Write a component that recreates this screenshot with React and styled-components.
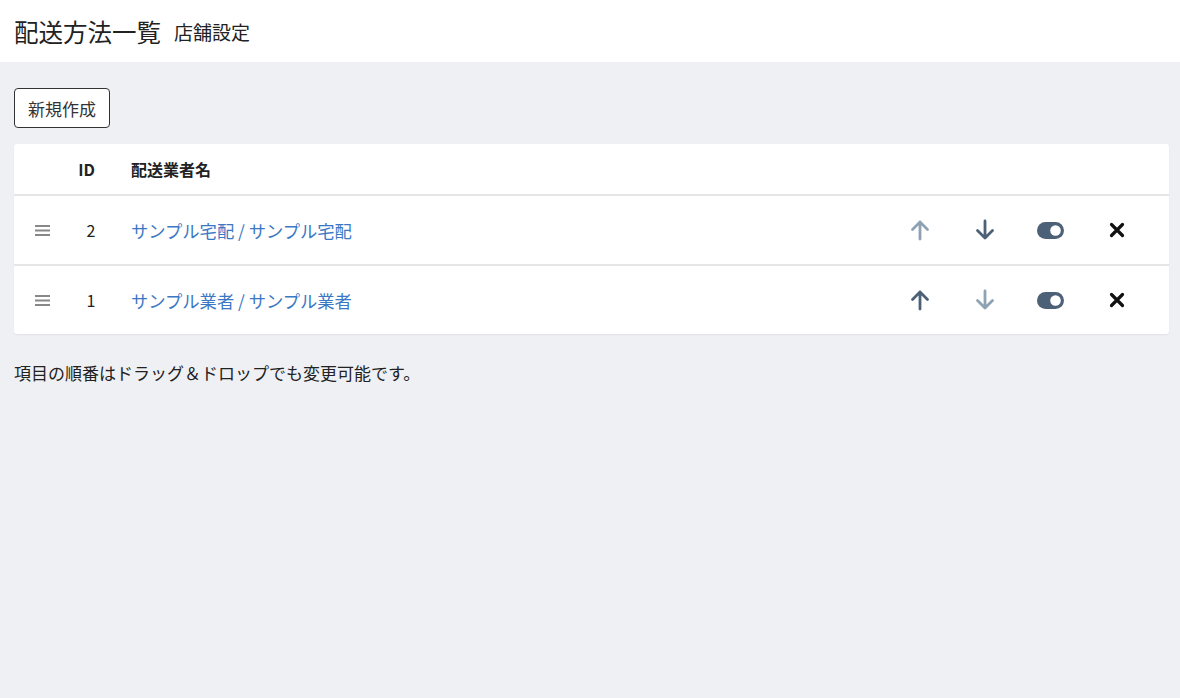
import React from "react";
import styled, { createGlobalStyle } from "styled-components";

const GlobalStyle = createGlobalStyle`
  body {
    margin: 0;
    background: #eff0f3;
    font-family: "Noto Sans CJK JP", "Noto Sans", sans-serif;
    color: #222;
  }
`;

const Header = styled.header`
  background: #fff;
  height: 62px;
  display: flex;
  align-items: center;
  gap: 13px;
  padding: 0 14px;
`;

const Title = styled.h1`
  margin: 0;
  font-size: 24.5px;
  font-weight: 400;
  color: #222;
`;

const SubTitle = styled.span`
  font-size: 19px;
  color: #222;
`;

const Main = styled.main`
  padding: 26px 11px 0 14px;
`;

const Button = styled.button`
  font-family: inherit;
  font-size: 17px;
  color: #333;
  background: #fff;
  border: 1px solid #333;
  border-radius: 4px;
  height: 40px;
  padding: 0 13px;
  cursor: pointer;
`;

const Card = styled.div`
  margin-top: 16px;
  background: #fff;
  border-radius: 3px;
  box-shadow: 0 1px 2px rgba(0, 0, 0, 0.06);
`;

const Row = styled.div`
  display: grid;
  grid-template-columns: 56px 42px 1fr 65px 65px 67px 65px 20px;
  align-items: center;
  height: ${(p) => (p.$head ? "50px" : "68px")};
  font-size: 17.3px;
  border-top: ${(p) => (p.$first ? "none" : "2px solid #e6e6e6")};
`;

const HeadCell = styled.div`
  font-weight: 700;
  font-size: 16px;
  text-align: ${(p) => (p.$center ? "center" : "left")};
  padding-left: ${(p) => (p.$pad ? "19px" : "0")};
  padding-right: ${(p) => (p.$center ? "9px" : "0")};
`;

const IdCell = styled.div`
  text-align: center;
  font-size: 16px;
  color: #222;
`;

const NameLink = styled.a`
  color: #3b78c4;
  text-decoration: none;
  padding-left: 19px;
  cursor: pointer;
`;

const IconCell = styled.div`
  display: flex;
  justify-content: center;
  align-items: center;
  color: ${(p) => p.$color || "#4c6177"};
`;

const Handle = styled(IconCell)`
  color: #888;
  justify-content: flex-start;
  padding-left: 21px;
`;

const Note = styled.p`
  margin: 26px 0 0;
  font-size: 17px;
  color: #222;
`;

const Bars = () => (
  <svg width="15" height="13" viewBox="0 0 15 13">
    <rect x="0" y="1" width="15" height="2" fill="currentColor" />
    <rect x="0" y="5.5" width="15" height="2" fill="currentColor" />
    <rect x="0" y="10" width="15" height="2" fill="currentColor" />
  </svg>
);

const Arrow = ({ down }) => (
  <svg
    width="22"
    height="22"
    viewBox="0 0 22 22"
    style={{ transform: down ? "rotate(180deg)" : "none" }}
  >
    <path
      d="M11 20V3M3.5 10.5L11 3l7.5 7.5"
      fill="none"
      stroke="currentColor"
      strokeWidth="2.8"
      strokeLinecap="round"
      strokeLinejoin="round"
    />
  </svg>
);

const Toggle = () => (
  <svg width="27" height="17" viewBox="0 0 27 17">
    <rect x="0" y="0" width="27" height="17" rx="8.5" fill="#4c6177" />
    <circle cx="18.5" cy="8.5" r="5.3" fill="#fff" />
  </svg>
);

const Cross = () => (
  <svg width="16" height="16" viewBox="0 0 16 16">
    <path
      d="M2.5 2.5l11 11M13.5 2.5l-11 11"
      stroke="#111"
      strokeWidth="3.2"
      strokeLinecap="round"
    />
  </svg>
);

const items = [
  { id: 2, name: "サンプル宅配 / サンプル宅配", up: false, down: true },
  { id: 1, name: "サンプル業者 / サンプル業者", up: true, down: false },
];

export default function App() {
  return (
    <>
      <GlobalStyle />
      <Header>
        <Title>配送方法一覧</Title>
        <SubTitle>店舗設定</SubTitle>
      </Header>
      <Main>
        <Button>新規作成</Button>
        <Card>
          <Row $head $first>
            <div />
            <HeadCell $center>ID</HeadCell>
            <HeadCell $pad>配送業者名</HeadCell>
          </Row>
          {items.map((item) => (
            <Row key={item.id}>
              <Handle>
                <Bars />
              </Handle>
              <IdCell>{item.id}</IdCell>
              <div>
                <NameLink>{item.name}</NameLink>
              </div>
              <IconCell $color={item.up ? "#4c6177" : "#8fa2b4"}>
                <Arrow />
              </IconCell>
              <IconCell $color={item.down ? "#4c6177" : "#8fa2b4"}>
                <Arrow down />
              </IconCell>
              <IconCell>
                <Toggle />
              </IconCell>
              <IconCell>
                <Cross />
              </IconCell>
              <div />
            </Row>
          ))}
        </Card>
        <Note>項目の順番はドラッグ＆ドロップでも変更可能です。</Note>
      </Main>
    </>
  );
}
